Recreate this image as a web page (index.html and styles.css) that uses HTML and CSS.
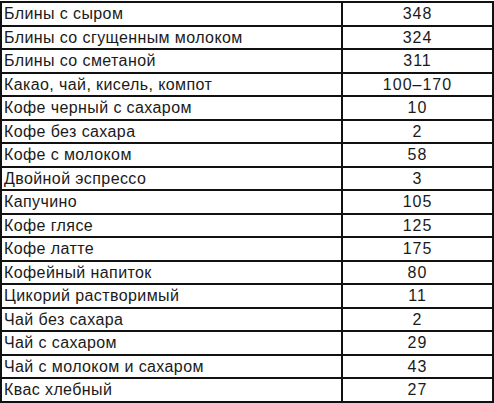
FILE: index.html
```html
<!DOCTYPE html>
<html lang="ru">
<head>
<meta charset="utf-8">
<link rel="stylesheet" href="styles.css">
</head>
<body>
<table class="kcal">
<tbody>
<tr><td class="name">Блины с сыром</td><td class="val">348</td></tr>
<tr><td class="name">Блины со сгущенным молоком</td><td class="val">324</td></tr>
<tr><td class="name">Блины со сметаной</td><td class="val">311</td></tr>
<tr><td class="name">Какао, чай, кисель, компот</td><td class="val">100–170</td></tr>
<tr><td class="name">Кофе черный с сахаром</td><td class="val">10</td></tr>
<tr><td class="name">Кофе без сахара</td><td class="val">2</td></tr>
<tr><td class="name">Кофе с молоком</td><td class="val">58</td></tr>
<tr><td class="name">Двойной эспрессо</td><td class="val">3</td></tr>
<tr><td class="name">Капучино</td><td class="val">105</td></tr>
<tr><td class="name">Кофе глясе</td><td class="val">125</td></tr>
<tr><td class="name">Кофе латте</td><td class="val">175</td></tr>
<tr><td class="name">Кофейный напиток</td><td class="val">80</td></tr>
<tr><td class="name">Цикорий растворимый</td><td class="val">11</td></tr>
<tr><td class="name">Чай без сахара</td><td class="val">2</td></tr>
<tr><td class="name">Чай с сахаром</td><td class="val">29</td></tr>
<tr><td class="name">Чай с молоком и сахаром</td><td class="val">43</td></tr>
<tr><td class="name">Квас хлебный</td><td class="val">27</td></tr>
</tbody>
</table>
</body>
</html>
```
FILE: styles.css
```css
html, body {
  margin: 0;
  padding: 0;
  background: #ffffff;
}
body {
  padding-top: 1px;
  font-family: "Liberation Sans", Arial, sans-serif;
  color: #1a1a1a;
}
.kcal {
  width: 494px;
  border-collapse: separate;
  border-spacing: 0;
  border-top: 2px solid #111;
  border-left: 2px solid #111;
  table-layout: fixed;
}
.kcal td {
  height: 21.5px;
  padding: 0;
  border-right: 2px solid #111;
  border-bottom: 2px solid #111;
  font-size: 16px;
  line-height: 21.5px;
  white-space: nowrap;
  vertical-align: middle;
}
.kcal .name {
  width: 337px;
  padding-left: 2px;
  letter-spacing: 0.4px;
}
.kcal .val {
  text-align: center;
  letter-spacing: 1px;
}
```
